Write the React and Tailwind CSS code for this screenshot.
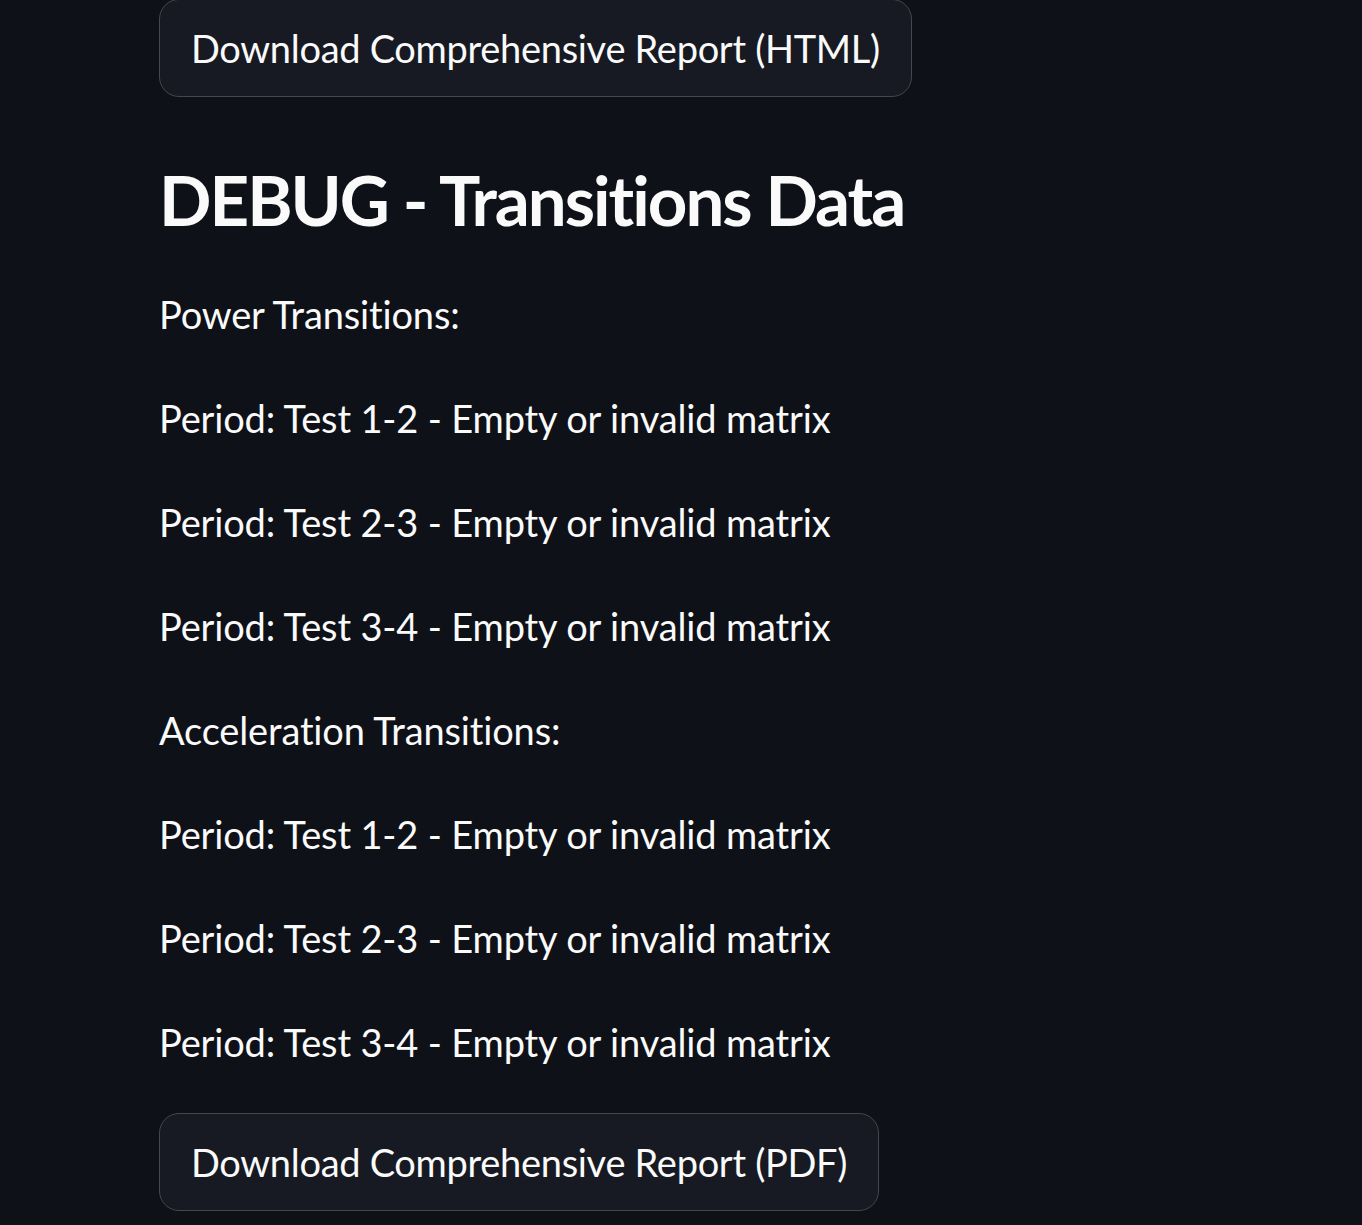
export default function App() {
  const lines = [
    "Period: Test 1-2 - Empty or invalid matrix",
    "Period: Test 2-3 - Empty or invalid matrix",
    "Period: Test 3-4 - Empty or invalid matrix",
  ];
  const P = ({ children }) => (
    <p className="h-[64px] leading-[64px] mb-[40px] text-[38px] tracking-[-0.15px] whitespace-nowrap">{children}</p>
  );
  return (
    <div className="min-h-[1225px] bg-[#0e1117] text-[#fafafa] pl-[159px] font-['Lato',sans-serif] [font-variant-ligatures:none]">
      <button className="mt-[-1px] h-[98px] inline-flex items-center rounded-[20px] border border-[#45474d] bg-[#171a22] px-[31px] text-[38px] tracking-[-0.3px] text-[#fafafa] whitespace-nowrap">
        Download Comprehensive Report (HTML)
      </button>
      <h2 className="mt-[53px] mb-[32px] h-[100px] leading-[100px] text-[69px] tracking-[-2px] font-bold whitespace-nowrap">
        DEBUG - Transitions Data
      </h2>
      <P>Power Transitions:</P>
      {lines.map((l) => <P key={"a" + l}>{l}</P>)}
      <P>Acceleration Transitions:</P>
      {lines.map((l) => <P key={"b" + l}>{l}</P>)}
      <div className="mt-[-1px]">
        <button className="h-[98px] inline-flex items-center rounded-[20px] border border-[#45474d] bg-[#171a22] px-[31px] text-[38px] tracking-[-0.3px] text-[#fafafa] whitespace-nowrap">
          Download Comprehensive Report (PDF)
        </button>
      </div>
    </div>
  );
}
